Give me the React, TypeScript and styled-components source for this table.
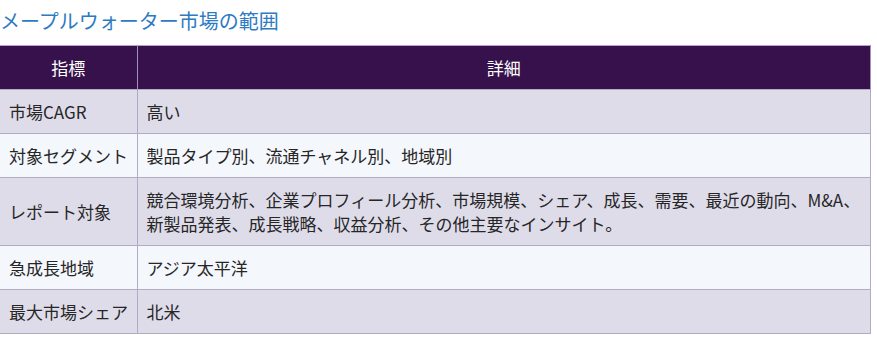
import styled, { createGlobalStyle } from "styled-components";

const GlobalStyle = createGlobalStyle`
    body {
        margin: 0;
        background: #ffffff;
        font-family: "Noto Sans CJK JP", "Noto Sans", sans-serif;
    }
`;

interface Row {
    label: string,
    detail: string
}

const rows: Row[] = [
    { label: "市場CAGR", detail: "高い" },
    { label: "対象セグメント", detail: "製品タイプ別、流通チャネル別、地域別" },
    { label: "レポート対象", detail: "競合環境分析、企業プロフィール分析、市場規模、シェア、成長、需要、最近の動向、M&A、新製品発表、成長戦略、収益分析、その他主要なインサイト。" },
    { label: "急成長地域", detail: "アジア太平洋" },
    { label: "最大市場シェア", detail: "北米" },
];

const Page = styled.div`
    width: 871px;
    padding-top: 6px;
`;

const Heading = styled.h2`
    margin: 0 0 9px 0;
    font-size: 20px;
    font-weight: 400;
    line-height: 30px;
    color: #2d7bc3;
`;

const Table = styled.table`
    width: 871px;
    border-collapse: collapse;
    table-layout: fixed;
    font-size: 17px;
    line-height: 24px;
    color: #262626;
`;

const HeadCell = styled.th`
    background: #36114b;
    color: #ffffff;
    font-weight: 400;
    text-align: center;
    padding: 10px 10px 9px;
    border-top: 1px solid #b89fd2;
    border-left: 1px solid #a58fbf;
    border-right: 1px solid #a58fbf;
    &:first-child {
        border-left: none;
    }
`;

const BodyRow = styled.tr<{ $odd: boolean }>`
    background: ${p => p.$odd ? "#dfdcea" : "#f4f7fc"};
`;

const Cell = styled.td`
    padding: 10px 8px 9px 9px;
    border: 1px solid #b2abc5;
    vertical-align: middle;
    &:first-child {
        border-left: none;
    }
`;

const App = () => {
    return (
        <Page>
            <GlobalStyle />
            <Heading>メープルウォーター市場の範囲</Heading>
            <Table>
                <colgroup>
                    <col style={{ width: 137 }} />
                    <col />
                </colgroup>
                <thead>
                    <tr>
                        <HeadCell>指標</HeadCell>
                        <HeadCell>詳細</HeadCell>
                    </tr>
                </thead>
                <tbody>
                    {rows.map((r, i) => (
                        <BodyRow key={r.label} $odd={i % 2 === 0}>
                            <Cell>{r.label}</Cell>
                            <Cell>{r.detail}</Cell>
                        </BodyRow>
                    ))}
                </tbody>
            </Table>
        </Page>
    )
}

export default App;
